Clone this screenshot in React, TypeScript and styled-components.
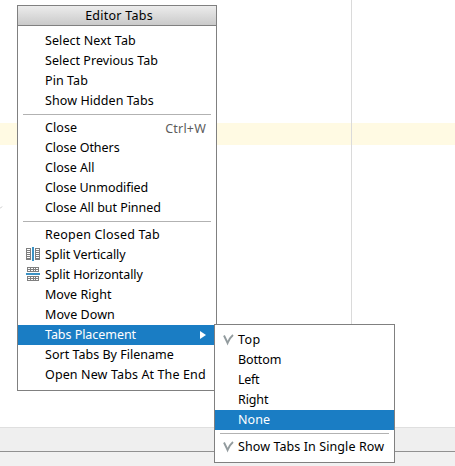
import React from "react";
import styled, { createGlobalStyle } from "styled-components";

const GlobalStyle = createGlobalStyle`
  * { box-sizing: border-box; }
  body { margin: 0; background: #fff; overflow: hidden; }
`;

const Editor = styled.main`
  position: relative;
  display: flex;
  flex-direction: column;
  width: 455px;
  height: 466px;
  overflow: hidden;
  background: #fff;
  font-family: "Noto Sans", "Open Sans", sans-serif;
  font-size: 12.5px;
  color: #000;
`;

const Canvas = styled.section`
  flex: 1;
  padding-top: 123px;
`;

const CaretLine = styled.div`
  height: 22px;
  background: #fffae3;
`;

const RightMargin = styled.div`
  position: absolute;
  top: 0;
  left: 351px;
  width: 1px;
  height: 427px;
  background: #dadada;
`;

const FoldMark = styled.svg`
  position: absolute;
  top: 206px;
  left: 0;
`;

const ToolStripe = styled.div`
  height: 25px;
  border-top: 1px solid #dfdfdf;
  border-bottom: 1px solid #919191;
  background: #efefef;
`;

const StatusBar = styled.footer`
  height: 14px;
  background: #f1f1f1;
`;

const Popup = styled.div<{ $x: number; $y: number; $width: number }>`
  position: absolute;
  left: ${(p) => p.$x}px;
  top: ${(p) => p.$y}px;
  width: ${(p) => p.$width}px;
  border: 1px solid #808080;
  background: #fff;
`;

const Title = styled.header`
  height: 20px;
  padding-left: 4px;
  border-bottom: 1px solid #808080;
  background: linear-gradient(#ececec, #cacaca);
  line-height: 19px;
  text-align: center;
  letter-spacing: 0.25px;
`;

const List = styled.div`
  padding: 5px 0;
`;

const Separator = styled.div`
  height: 1px;
  margin: 3px 5px;
  background: #b2b2b2;
`;

const Row = styled.div<{ $active?: boolean; $iconWidth: number }>`
  display: grid;
  grid-template-columns: ${(p) => p.$iconWidth}px 1fr auto;
  align-items: center;
  height: 20px;
  padding-right: 10px;
  white-space: nowrap;
  color: ${(p) => (p.$active ? "#fff" : "#000")};
  background: ${(p) => (p.$active ? "#1a7dc4" : "transparent")};
`;

const IconCell = styled.span`
  display: flex;
  padding-left: 8px;
`;

const Label = styled.span<{ $tracking: number }>`
  height: 20px;
  line-height: 19px;
  letter-spacing: ${(p) => p.$tracking}px;
`;

const Shortcut = styled.span`
  height: 20px;
  line-height: 21px;
  color: #5c5c5c;
  letter-spacing: 0.2px;
`;

const SplitGlyph = styled.svg`
  display: block;
  margin-bottom: 2px;
`;

const SplitIcon = ({ horizontal }: { horizontal?: boolean }) =>
  horizontal ? (
    <SplitGlyph width="14" height="14" shapeRendering="crispEdges">
      <path fill="#7f7f7f" d="M1 0h12v5H1zM1 9h12v5H1z" />
      <path fill="#fff" d="M2 1h2v1H2zM5 1h2v1H5zM8 1h1v1H8zM10 1h2v1h-2zM2 3h2v1H2zM5 3h2v1H5zM8 3h1v1H8zM10 3h2v1h-2zM2 10h2v1H2zM5 10h2v1H5zM8 10h1v1H8zM10 10h2v1h-2zM2 12h2v1H2zM5 12h2v1H5zM8 12h1v1H8zM10 12h2v1h-2z" />
      <path fill="#3b92c4" d="M0 6h14v2H0z" />
    </SplitGlyph>
  ) : (
    <SplitGlyph width="14" height="14" shapeRendering="crispEdges">
      <path fill="#7f7f7f" d="M0 1h5v12H0zM9 1h5v12H9z" />
      <path fill="#fff" d="M1 2h3v1H1zM1 4h3v1H1zM1 6h3v1H1zM1 8h3v1H1zM1 10h3v1H1zM10 2h3v1h-3zM10 4h3v1h-3zM10 6h3v1h-3zM10 8h3v1h-3zM10 10h3v1h-3z" />
      <path fill="#3b92c4" d="M6 0h2v14H6z" />
    </SplitGlyph>
  );

const CheckIcon = () => (
  <svg width="11" height="12" viewBox="0 0 11 12">
    <path d="M1 1.5 4.6 9Q6.5 4 10 1" fill="none" stroke="#929b9e" strokeWidth="1.9" />
  </svg>
);

const Arrow = styled.svg`
  display: block;
`;

type Item = {
  label: string;
  tracking?: number;
  icon?: React.ReactNode;
  shortcut?: string;
  submenu?: boolean;
  active?: boolean;
};

const editorTabs: Item[][] = [
  [
    { label: "Select Next Tab", tracking: 0.1 },
    { label: "Select Previous Tab", tracking: 0.05 },
    { label: "Pin Tab", tracking: 0.07 },
    { label: "Show Hidden Tabs", tracking: 0.08 },
  ],
  [
    { label: "Close", shortcut: "Ctrl+W", tracking: 0.1 },
    { label: "Close Others", tracking: -0.05 },
    { label: "Close All", tracking: 0 },
    { label: "Close Unmodified", tracking: -0.07 },
    { label: "Close All but Pinned", tracking: -0.05 },
  ],
  [
    { label: "Reopen Closed Tab", tracking: 0.2 },
    { label: "Split Vertically", icon: <SplitIcon />, tracking: -0.08 },
    { label: "Split Horizontally", icon: <SplitIcon horizontal />, tracking: -0.1 },
    { label: "Move Right", tracking: 0.03 },
    { label: "Move Down", tracking: 0.06 },
    { label: "Tabs Placement", submenu: true, active: true, tracking: -0.05 },
    { label: "Sort Tabs By Filename", tracking: 0.02 },
    { label: "Open New Tabs At The End", tracking: 0.12 },
  ],
];

const placement: Item[][] = [
  [
    { label: "Top", icon: <CheckIcon />, tracking: 0.4 },
    { label: "Bottom", tracking: -0.12 },
    { label: "Left", tracking: -0.3 },
    { label: "Right", tracking: -0.12 },
    { label: "None", active: true, tracking: 0.1 },
  ],
  [{ label: "Show Tabs In Single Row", icon: <CheckIcon />, tracking: 0.09 }],
];

const Groups = ({ groups, iconWidth }: { groups: Item[][]; iconWidth: number }) => (
  <List>
    {groups.map((items, i) => (
      <React.Fragment key={i}>
        {i > 0 && <Separator />}
        {items.map((it) => (
          <Row key={it.label} $active={it.active} $iconWidth={iconWidth}>
            <IconCell>{it.icon}</IconCell>
            <Label $tracking={it.tracking ?? 0}>{it.label}</Label>
            {it.shortcut && <Shortcut>{it.shortcut}</Shortcut>}
            {it.submenu && (
              <Arrow width="6" height="8">
                <path d="M0 0 6 4 0 8z" fill="#fff" />
              </Arrow>
            )}
          </Row>
        ))}
      </React.Fragment>
    ))}
  </List>
);

export default function App() {
  return (
    <Editor>
      <GlobalStyle />
      <Canvas>
        <CaretLine />
      </Canvas>
      <ToolStripe />
      <StatusBar />
      <RightMargin />
      <FoldMark width="3" height="3">
        <path d="M0 2.5 2 .5" stroke="#c4c4c4" fill="none" />
      </FoldMark>
      <Popup $x={17} $y={5} $width={200}>
        <Title>Editor Tabs</Title>
        <Groups groups={editorTabs} iconWidth={27} />
      </Popup>
      <Popup $x={214} $y={324} $width={181}>
        <Groups groups={placement} iconWidth={23} />
      </Popup>
    </Editor>
  );
}
